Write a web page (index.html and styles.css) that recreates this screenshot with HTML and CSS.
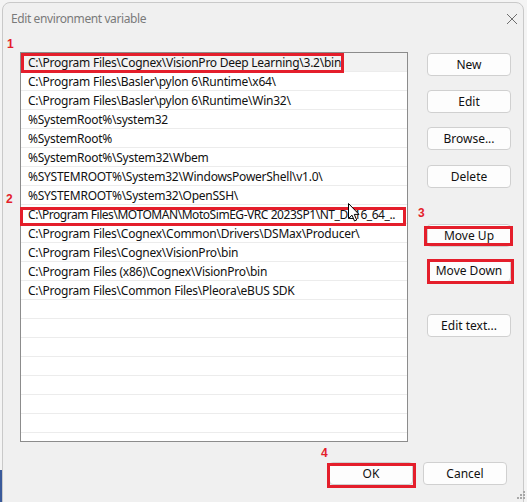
FILE: index.html
```html
<!DOCTYPE html>
<html>
<head>
<meta charset="utf-8">
<link rel="stylesheet" href="styles.css">
</head>
<body>
<div class="desk-strip"></div>
<div class="window">
  <div class="titlebar">
    <span class="title">Edit environment variable</span>
    <svg class="close" width="12" height="12" viewBox="0 0 12 12"><path d="M1 1 L11 11 M11 1 L1 11" stroke="#6e6e6e" stroke-width="1"/></svg>
  </div>
  <div class="main">
    <div class="list">
      <div class="row sel">C:\Program Files\Cognex\VisionPro Deep Learning\3.2\bin</div>
      <div class="row">C:\Program Files\Basler\pylon 6\Runtime\x64\</div>
      <div class="row">C:\Program Files\Basler\pylon 6\Runtime\Win32\</div>
      <div class="row">%SystemRoot%\system32</div>
      <div class="row">%SystemRoot%</div>
      <div class="row">%SystemRoot%\System32\Wbem</div>
      <div class="row">%SYSTEMROOT%\System32\WindowsPowerShell\v1.0\</div>
      <div class="row">%SYSTEMROOT%\System32\OpenSSH\</div>
      <div class="row tight">C:\Program Files\MOTOMAN\MotoSimEG-VRC 2023SP1\NT_DE16_64_..</div>
      <div class="row">C:\Program Files\Cognex\Common\Drivers\DSMax\Producer\</div>
      <div class="row">C:\Program Files\Cognex\VisionPro\bin</div>
      <div class="row">C:\Program Files (x86)\Cognex\VisionPro\bin</div>
      <div class="row">C:\Program Files\Common Files\Pleora\eBUS SDK</div>
      <div class="row"></div>
      <div class="row"></div>
      <div class="row"></div>
      <div class="row"></div>
      <div class="row"></div>
      <div class="row"></div>
      <div class="row"></div>
    </div>
    <div class="buttons">
      <div class="btn b-new">New</div>
      <div class="btn b-edit">Edit</div>
      <div class="btn b-browse">Browse...</div>
      <div class="btn b-delete">Delete</div>
      <div class="btn b-up">Move Up</div>
      <div class="btn b-down">Move Down</div>
      <div class="btn b-text">Edit text...</div>
    </div>
  </div>
  <div class="footer">
    <div class="btn">OK</div>
    <div class="btn">Cancel</div>
  </div>

  <div class="mark m1"></div>
  <div class="mark m2"></div>
  <div class="mark m3"></div>
  <div class="mark m4"></div>
  <div class="mark m5"></div>
  <span class="num n1">1</span>
  <span class="num n2">2</span>
  <span class="num n3">3</span>
  <span class="num n4">4</span>

  <svg class="cursor" width="12" height="19" viewBox="0 0 12 19"><path d="M0.5 0.5 L0.5 15.5 L4 12.2 L6.5 18 L8.7 17 L6.3 11.4 L11 11.4 Z" fill="#fff" stroke="#000" stroke-width="1" stroke-linejoin="round"/></svg>

  <svg class="grip" width="10" height="10" viewBox="0 0 10 10">
    <rect x="8" y="0" width="2" height="2" fill="#a8a8a8"/>
    <rect x="5" y="3" width="2" height="2" fill="#a8a8a8"/>
    <rect x="8" y="3" width="2" height="2" fill="#a8a8a8"/>
    <rect x="2" y="6" width="2" height="2" fill="#a8a8a8"/>
    <rect x="5" y="6" width="2" height="2" fill="#a8a8a8"/>
    <rect x="8" y="6" width="2" height="2" fill="#a8a8a8"/>
  </svg>
</div>
</body>
</html>
```

FILE: styles.css
```css
html, body {
  margin: 0;
  padding: 0;
  width: 527px;
  height: 502px;
  overflow: hidden;
  background: #f4f4f4;
  font-family: "Noto Sans", "Liberation Sans", sans-serif;
}
.desk-strip {
  position: absolute;
  left: 0;
  top: 470px;
  width: 3px;
  height: 32px;
  background: #3a5a9a;
}
.window {
  position: relative;
  margin: 2px 0 0 2px;
  width: 522px;
  height: 510px;
  box-sizing: border-box;
  background: #f0f0f0;
  border: 1px solid #c9c9c9;
  border-radius: 8px;
}
.titlebar {
  height: 49px;
  display: flex;
  justify-content: space-between;
  align-items: flex-start;
  padding: 8px 5px 0 8px;
  box-sizing: border-box;
}
.title {
  font-size: 12px;
  line-height: 16px;
  color: #7a7a7a;
  letter-spacing: -0.4px;
}
.close {
  margin-top: 2px;
}
.main {
  display: flex;
  padding-left: 17px;
}
.list {
  width: 388px;
  height: 390px;
  box-sizing: border-box;
  border: 1px solid #8c8c8c;
  background: #fff;
  overflow: hidden;
}
.row {
  height: 19px;
  box-sizing: border-box;
  border-bottom: 1px solid #ececec;
  padding-left: 7px;
  font-size: 12px;
  line-height: 19px;
  color: #111;
  white-space: nowrap;
  letter-spacing: -0.25px;
}
.row.tight {
  letter-spacing: -0.45px;
}
.row.sel {
  background: #f2f2f2;
}
.buttons {
  margin-left: 19px;
  width: 84px;
  display: flex;
  flex-direction: column;
}
.btn {
  width: 84px;
  height: 23px;
  box-sizing: border-box;
  border: 1px solid #d0d0d0;
  border-radius: 4px;
  background: #fdfdfd;
  font-size: 12px;
  line-height: 21px;
  text-align: center;
  color: #111;
}
.b-new { margin-top: 1px; }
.b-edit { margin-top: 14px; }
.b-browse { margin-top: 14px; }
.b-delete { margin-top: 15px; }
.b-up { margin-top: 36px; }
.b-down { margin-top: 12px; }
.b-text { margin-top: 32px; }
.footer {
  display: flex;
  justify-content: flex-end;
  gap: 10px;
  padding-right: 16px;
  margin-top: 20px;
}
.mark {
  position: absolute;
  border: 3px solid #e41e2b;
  box-sizing: border-box;
}
.m1 { left: 18px; top: 50px; width: 323px; height: 20px; }
.m2 { left: 17px; top: 204px; width: 386px; height: 19px; }
.m3 { left: 421px; top: 223px; width: 89px; height: 20px; }
.m4 { left: 424px; top: 256px; width: 87px; height: 25px; }
.m5 { left: 324px; top: 460px; width: 89px; height: 25px; }
.num {
  position: absolute;
  font-family: "Liberation Sans", sans-serif;
  font-weight: bold;
  font-size: 12px;
  line-height: 12px;
  color: #e41e2b;
}
.n1 { left: 4px; top: 35px; }
.n2 { left: 3px; top: 190px; }
.n3 { left: 415px; top: 204px; }
.n4 { left: 318px; top: 444px; }
.cursor {
  position: absolute;
  left: 345px;
  top: 200px;
}
.grip {
  position: absolute;
  left: 512px;
  top: 488px;
}
```
